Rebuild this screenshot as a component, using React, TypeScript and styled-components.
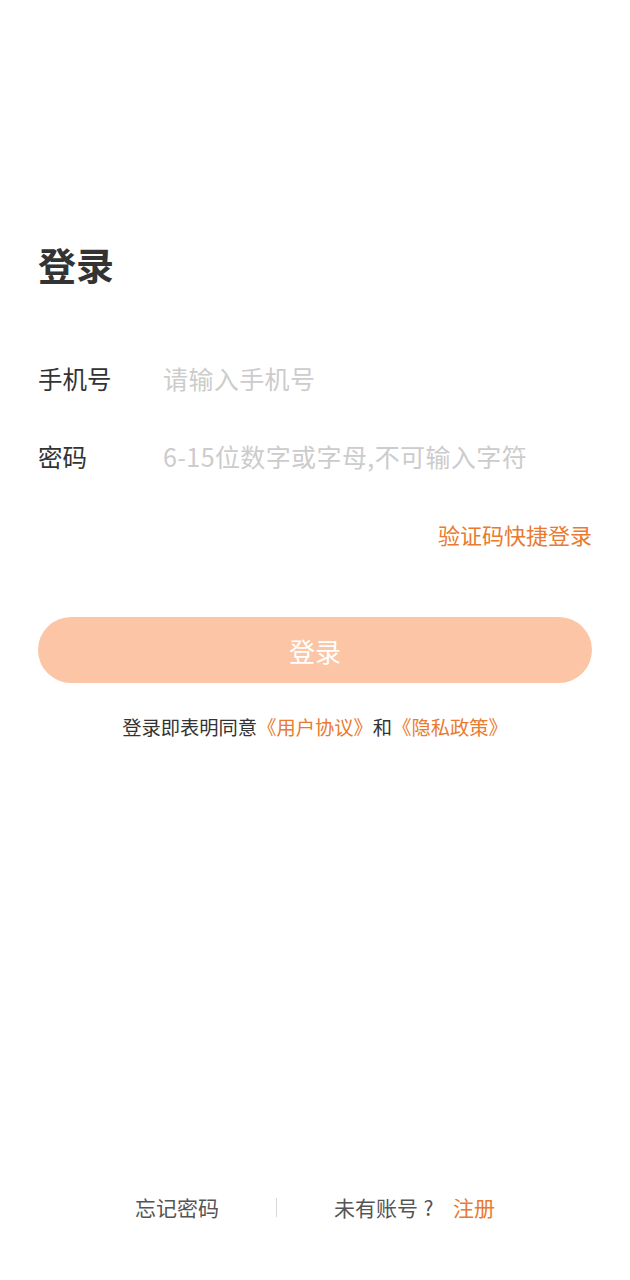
import React, { useState } from 'react';
import styled, { createGlobalStyle } from 'styled-components';

const GlobalStyle = createGlobalStyle`
  html, body {
    margin: 0;
    padding: 0;
    background: #ffffff;
  }
  body {
    font-family: "Noto Sans CJK SC", "Noto Sans", sans-serif;
    -webkit-font-smoothing: antialiased;
  }
  * {
    box-sizing: border-box;
  }
`;

const orange = '#e97a2f';

const Page = styled.div`
  min-height: 1280px;
  display: flex;
  flex-direction: column;
  padding: 0 38px;
`;

const Title = styled.h1`
  margin: 239px 0 50px;
  height: 50px;
  line-height: 50px;
  font-size: 38px;
  font-weight: 700;
  color: #333333;
`;

const Field = styled.label`
  display: flex;
  align-items: center;
  height: 78px;
`;

const FieldLabel = styled.span`
  width: 125px;
  flex-shrink: 0;
  font-size: 24.5px;
  color: #333333;
`;

const FieldInput = styled.input`
  flex: 1;
  min-width: 0;
  border: none;
  outline: none;
  padding: 0;
  background: transparent;
  font-family: inherit;
  font-size: 25px;
  letter-spacing: 0.4px;
  color: #333333;

  &::placeholder {
    color: #cccccc;
  }
`;

const QuickRow = styled.div`
  display: flex;
  justify-content: flex-end;
  align-items: center;
  height: 44px;
  margin-top: 17px;
`;

const TextLink = styled.a<{ $size?: number }>`
  color: ${orange};
  font-size: ${(p) => p.$size ?? 22}px;
  text-decoration: none;
  cursor: pointer;
`;

const SubmitButton = styled.button<{ $active: boolean }>`
  margin-top: 61px;
  height: 66px;
  width: 100%;
  border: none;
  border-radius: 33px;
  background: ${(p) => (p.$active ? '#f7a26a' : '#fcc5a6')};
  color: #ffffff;
  font-family: inherit;
  font-size: 26px;
  cursor: pointer;
`;

const Agreement = styled.p`
  margin: 33px 0 0;
  line-height: 22px;
  font-size: 19.3px;
  color: #333333;
  text-align: center;
`;

const Footer = styled.div`
  margin-top: auto;
  padding-bottom: 53px;
  height: 93px;
  display: flex;
  justify-content: center;
  align-items: flex-start;
`;

const FooterRow = styled.div`
  height: 40px;
  display: flex;
  align-items: center;
  gap: 57px;
  font-size: 21px;
  color: #555555;
`;

const Divider = styled.span`
  width: 1px;
  height: 19px;
  background: #d6d6d6;
`;

const QuestionMark = styled.span`
  display: inline-block;
  width: 21px;
  text-align: center;
`;

const Register = styled(TextLink)`
  margin-left: 14px;
`;

const App: React.FC = () => {
  const [phone, setPhone] = useState('');
  const [password, setPassword] = useState('');
  const filled = phone.length > 0 && password.length > 0;

  return (
    <>
      <GlobalStyle />
      <Page>
        <Title>登录</Title>
        <Field>
          <FieldLabel>手机号</FieldLabel>
          <FieldInput
            type="tel"
            placeholder="请输入手机号"
            value={phone}
            onChange={(e) => setPhone(e.target.value)}
          />
        </Field>
        <Field>
          <FieldLabel>密码</FieldLabel>
          <FieldInput
            type="password"
            placeholder="6-15位数字或字母,不可输入字符"
            value={password}
            onChange={(e) => setPassword(e.target.value)}
          />
        </Field>
        <QuickRow>
          <TextLink>验证码快捷登录</TextLink>
        </QuickRow>
        <SubmitButton $active={filled}>登录</SubmitButton>
        <Agreement>
          登录即表明同意<TextLink $size={19.3}>《用户协议》</TextLink>和<TextLink $size={19.3}>《隐私政策》</TextLink>
        </Agreement>
        <Footer>
          <FooterRow>
            <span>忘记密码</span>
            <Divider />
            <span>
              未有账号<QuestionMark>?</QuestionMark>
              <Register $size={21}>注册</Register>
            </span>
          </FooterRow>
        </Footer>
      </Page>
    </>
  );
};

export default App;
